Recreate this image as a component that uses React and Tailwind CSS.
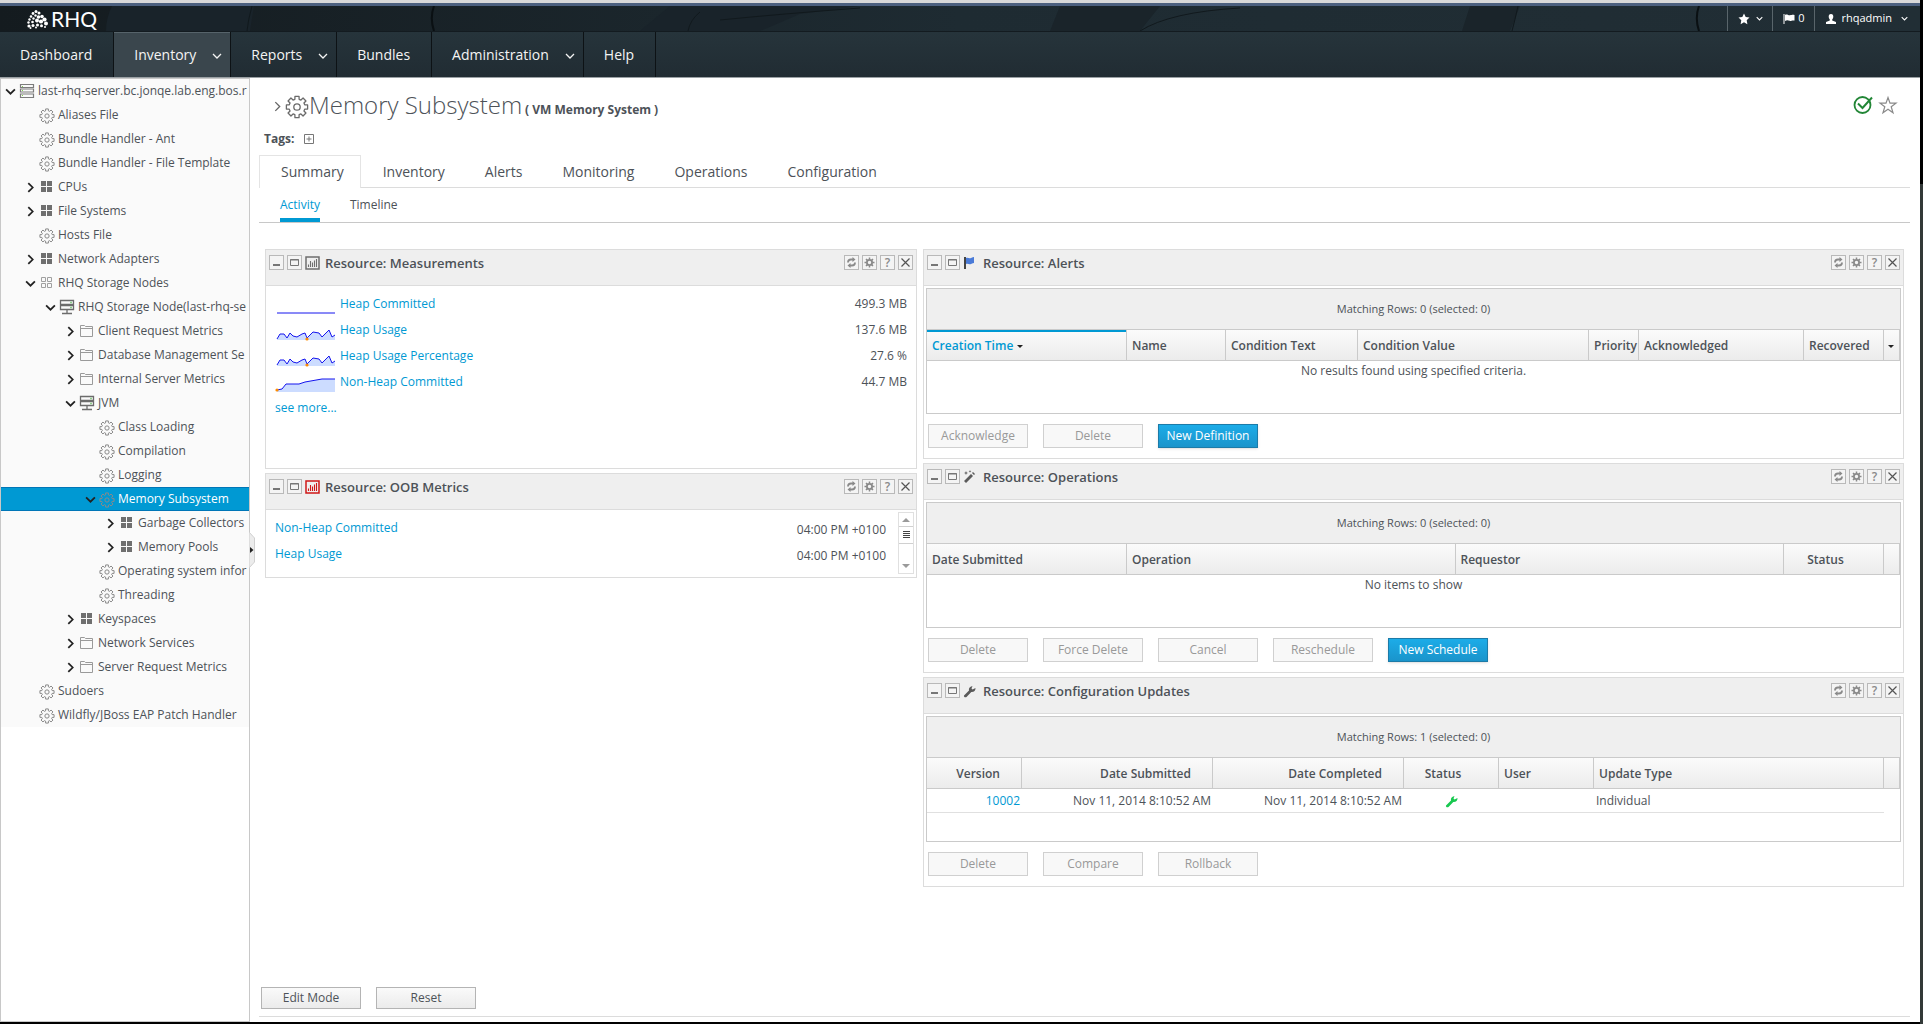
import { useState } from 'react';

const NAV_ITEMS = [
  { label: 'Dashboard' },
  { label: 'Inventory', menu: true, active: true },
  { label: 'Reports', menu: true },
  { label: 'Bundles' },
  { label: 'Administration', menu: true },
  { label: 'Help' },
];

const TABS = ['Summary', 'Inventory', 'Alerts', 'Monitoring', 'Operations', 'Configuration'];

// Full class names per tree depth
const INDENT = ['pl-1', 'pl-6', 'pl-11', 'pl-16', 'pl-[84px]', 'pl-[104px]'];

const TREE = [
  { label: 'last-rhq-server.bc.jonqe.lab.eng.bos.r', level: 0, icon: 'platform', state: 'open' },
  { label: 'Aliases File', level: 1, icon: 'gear' },
  { label: 'Bundle Handler - Ant', level: 1, icon: 'gear' },
  { label: 'Bundle Handler - File Template', level: 1, icon: 'gear' },
  { label: 'CPUs', level: 1, icon: 'group', state: 'closed' },
  { label: 'File Systems', level: 1, icon: 'group', state: 'closed' },
  { label: 'Hosts File', level: 1, icon: 'gear' },
  { label: 'Network Adapters', level: 1, icon: 'group', state: 'closed' },
  { label: 'RHQ Storage Nodes', level: 1, icon: 'groupOutline', state: 'open' },
  { label: 'RHQ Storage Node(last-rhq-se', level: 2, icon: 'server', state: 'open' },
  { label: 'Client Request Metrics', level: 3, icon: 'folder', state: 'closed' },
  { label: 'Database Management Se', level: 3, icon: 'folder', state: 'closed' },
  { label: 'Internal Server Metrics', level: 3, icon: 'folder', state: 'closed' },
  { label: 'JVM', level: 3, icon: 'server', state: 'open' },
  { label: 'Class Loading', level: 4, icon: 'gear' },
  { label: 'Compilation', level: 4, icon: 'gear' },
  { label: 'Logging', level: 4, icon: 'gear' },
  { label: 'Memory Subsystem', level: 4, icon: 'gear', state: 'open', selected: true },
  { label: 'Garbage Collectors', level: 5, icon: 'group', state: 'closed' },
  { label: 'Memory Pools', level: 5, icon: 'group', state: 'closed' },
  { label: 'Operating system infor', level: 4, icon: 'gear' },
  { label: 'Threading', level: 4, icon: 'gear' },
  { label: 'Keyspaces', level: 3, icon: 'group', state: 'closed' },
  { label: 'Network Services', level: 3, icon: 'folder', state: 'closed' },
  { label: 'Server Request Metrics', level: 3, icon: 'folder', state: 'closed' },
  { label: 'Sudoers', level: 1, icon: 'gear' },
  { label: 'Wildfly/JBoss EAP Patch Handler', level: 1, icon: 'gear' },
];

const USAGE = '2,22 5,17 9,17 12,21 15,16 18,19 22,20 27,17 30,16 32,21 38,15 44,16 47,20 54,13 57,20 60,18';

const MEASUREMENTS = [
  { name: 'Heap Committed', value: '499.3 MB', points: '2,22 60,22' },
  { name: 'Heap Usage', value: '137.6 MB', points: USAGE, low: [32, 21] },
  { name: 'Heap Usage Percentage', value: '27.6 %', points: USAGE, low: [32, 21] },
  { name: 'Non-Heap Committed', value: '44.7 MB', points: '2,21 7,20 11,15 24,15 30,13 47,10 60,10', low: [2, 20] },
];

const OOB = [
  { name: 'Non-Heap Committed', time: '04:00 PM +0100' },
  { name: 'Heap Usage', time: '04:00 PM +0100' },
];

/* ---------- icons ---------- */

// Eight-toothed cog outline, centred in a 24x24 box
const GEAR_PATH = (() => {
  const pts = [];
  for (let i = 0; i < 8; i++) {
    const base = (i * Math.PI) / 4 - Math.PI / 2;
    [[-0.27, 8], [-0.19, 10.8], [0.19, 10.8], [0.27, 8]].forEach(([a, r]) => {
      pts.push(`${(12 + r * Math.cos(base + a)).toFixed(2)} ${(12 + r * Math.sin(base + a)).toFixed(2)}`);
    });
  }
  return `M${pts.join('L')}Z`;
})();

function Gear({ className, width = 1.4 }) {
  return (
    <svg viewBox="0 0 24 24" className={className} fill="none" stroke="currentColor" strokeWidth={width} strokeLinejoin="round">
      <path d={GEAR_PATH} />
      <circle cx="12" cy="12" r="3.2" />
    </svg>
  );
}

function Chevron({ dir = 'down', className, width = 1.5 }) {
  const d = dir === 'down' ? 'M1 3l4 4 4-4' : 'M3 1l4 4-4 4';
  return (
    <svg viewBox="0 0 10 10" className={className} fill="none" stroke="currentColor" strokeWidth={width}>
      <path d={d} />
    </svg>
  );
}

function TreeIcon({ type }) {
  if (type === 'gear') return <Gear className="mt-[2px] size-4 text-[#8a8a8a]" width={1.5} />;
  if (type === 'group') {
    return (
      <svg viewBox="0 0 16 16" className="size-4" fill="#6f6f6f">
        <path d="M2 2h5v5H2zM8 2h5v5H8zM2 8h5v5H2zM8 8h5v5H8z" />
      </svg>
    );
  }
  if (type === 'groupOutline') {
    return (
      <svg viewBox="0 0 16 16" className="size-4" fill="none" stroke="#a0a0a0">
        <path d="M2.500 2.500h4v4h-4zM8.500 2.500h4v4h-4zM2.500 8.500h4v4h-4zM8.500 8.500h4v4h-4z" />
      </svg>
    );
  }
  if (type === 'folder') {
    return (
      <svg viewBox="0 0 16 16" className="size-4" fill="none" stroke="#9a9a9a">
        <path d="M1.500 13.500V2.500h4l1 1h7v10zM1.500 5.500h12" />
      </svg>
    );
  }
  if (type === 'server') {
    return (
      <svg viewBox="0 0 16 16" className="size-4" fill="none" stroke="#6c6c6c" strokeWidth="1.300">
        <path d="M1.500 1.500h13v4h-13zM1.500 6.500h13v4h-13zM8 11v3M3 14.500h10" />
        <path d="M11 3.500h2M11 8.500h2" stroke="#8ecf8a" />
      </svg>
    );
  }
  return (
    <svg viewBox="0 0 16 16" className="size-4" fill="none" stroke="#7c7c7c" strokeWidth="1.200">
      <path d="M1.500 1.500h13v3h-13zM1.500 6h13v3h-13zM1.500 11h13v3.500h-13z" />
      <path d="M3 3.500h1M3 7.500h1M3 12.500h1" stroke="#7fd34e" />
    </svg>
  );
}

function BarsIcon({ className }) {
  return (
    <svg viewBox="0 0 15 14" className={className} fill="none" stroke="currentColor" strokeWidth="1.500">
      <path d="M1 1h13v12H1z" />
      <path d="M3.500 11V8.500M5.500 11V5M7.500 11V6.500M9.500 11V4.500M11.500 11V3" strokeWidth="1.100" />
    </svg>
  );
}

function FlagIcon() {
  return (
    <svg viewBox="0 0 14 14" className="h-[14px] w-[14px]">
      <path d="M1 1h2v12H1z" fill="#444" />
      <path d="M3 2c2-1 3 1 5 0 1 0 1-1 3-1v6c-2 0-2 1-3 1-2 1-3-1-5 0z" fill="#4a7bd8" />
    </svg>
  );
}

function WandIcon() {
  return (
    <svg viewBox="0 0 14 14" className="h-[14px] w-[14px]" fill="#5a5a5a">
      <path d="M1 11l7-7 2 2-7 7zM9 3l1-1 2 2-1 1z" />
      <path d="M3 1l.6 1.400L5 3l-1.400.6L3 5l-.6-1.400L1 3l1.400-.6zM7 0l.4 1 1 .4-1 .4-.4 1-.4-1-1-.4 1-.4z" />
    </svg>
  );
}

function WrenchIcon({ className = 'text-[#5a5a5a]' }) {
  return (
    <svg viewBox="0 0 14 14" className={`h-[14px] w-[14px] ${className}`} fill="currentColor">
      <path d="M1 11.500l5-5c-.5-2 .5-4 3.500-4.500L8.500 4.500l1 1L12.500 4c.3 2.500-1.800 4.300-4.200 4L3.500 13c-1.400.8-3-.2-2.500-1.500z" />
    </svg>
  );
}

function Sparkline({ points, low }) {
  return (
    <svg viewBox="0 0 62 26" className="h-[26px] w-[62px]">
      {low && <polygon points={`2,23 ${points} 60,23`} fill="#ccdcff" />}
      <polyline points={points} fill="none" stroke="#1414ee" />
      {low && <circle cx={low[0]} cy={low[1] + 1} r="1.600" fill="#ff8c00" />}
    </svg>
  );
}

// Cluster of dots forming the mark beside the product name
function LogoMark() {
  const dots = [
    [3, 17, 1.6], [2.5, 13.5, 1.2], [3.5, 10.5, 1.2], [5, 7.5, 1.3], [7, 4.5, 1.4], [10, 2.5, 1.5],
    [13, 4, 1.5], [9.5, 6.5, 1.2], [7.5, 9.5, 1.2], [6.5, 13, 1.3], [7, 16.5, 1.5], [12.5, 8, 1.8],
    [16, 7.5, 1.8], [18.5, 10.5, 2.1], [11, 11.5, 2], [15, 12.5, 2.1], [11.5, 16, 1.5], [15.5, 16.8, 1.5],
    [20, 14.5, 2], [19, 18, 1], [4.5, 19, 1], [10, 18.5, 1],
  ];
  return (
    <svg viewBox="0 0 23 20" className="h-5 w-[23px]" fill="#fff">
      {dots.map(([cx, cy, r]) => (
        <circle key={`${cx}-${cy}`} cx={cx} cy={cy} r={r} />
      ))}
    </svg>
  );
}

/* ---------- header ---------- */

function TopBar() {
  return (
    <div className="relative flex h-[26px] items-stretch justify-between border-b border-[#131b20] bg-gradient-to-r from-[#141b1f] via-[#1e2b32] to-[#212e35] text-white">
      <svg viewBox="0 0 1920 25" preserveAspectRatio="none" className="absolute inset-0 h-full w-full" fill="none">
        <path d="M112 0C108 8 106 16 106 25H250L254 0zM670 0H860L800 8L760 25H640z" fill="#19232a" />
        <path d="M1060 0H1160L1140 25H1050zM1470 0H1520L1510 25H1462z" fill="#1a242a" />
        <path d="M434 0C431 8 431 16 434 25M1699 0C1696 8 1696 16 1699 25" stroke="#0a1013" strokeWidth="2" />
        <path d="M252 0Q248 14 247 25M720 14Q780 8 860 2M1140 25Q1170 6 1240 2M1518 0Q1515 14 1512 25M700 6Q690 14 688 25" stroke="#11191d" />
      </svg>
      <a href="#home" className="relative flex items-center gap-[2px] pl-[26px]">
        <LogoMark />
        <span className="font-['Lato',sans-serif] text-[21px] leading-5">RHQ</span>
      </a>
      <div className="relative flex text-[11px]">
        <button type="button" aria-label="Favorites" className="flex w-[45px] items-center justify-center gap-[6px] border-l border-[#59656b]">
          <svg viewBox="0 0 12 12" className="size-3" fill="#fff">
            <path d="M6 .5l1.700 3.600 3.800.5-2.800 2.700.7 3.900L6 9.300l-3.400 1.900.7-3.900L.5 4.600l3.800-.5z" />
          </svg>
          <Chevron className="size-[7px]" />
        </button>
        <button type="button" className="flex w-[42px] items-center justify-center gap-[3px] border-l border-[#59656b]">
          <svg viewBox="0 0 12 10" className="h-[10px] w-3" fill="#fff">
            <path d="M.5 0h1v10h-1zM2 1c2-1.200 3.500.6 5 .3C8.500 1.200 9 .6 11.500 1v5.500C9 6 8 7.200 6.500 6.800 5 6.400 4 6 2 7z" />
          </svg>
          0
        </button>
        <button type="button" className="flex items-center border-l border-[#59656b] pr-3 pl-[11px]">
          <svg viewBox="0 0 10 10" className="size-[10px]" fill="#fff">
            <path d="M5 0c1.600 0 2.400 1.200 2.300 2.700C7.200 4 6.600 4.900 6.200 5.400v1L10 8v2H0V8l3.800-1.600v-1C3.400 4.900 2.800 4 2.700 2.700 2.600 1.200 3.400 0 5 0z" />
          </svg>
          <span className="pr-[9px] pl-[5px]">rhqadmin</span>
          <Chevron className="size-[7px]" />
        </button>
      </div>
    </div>
  );
}

function MainNav() {
  return (
    <nav className="flex h-[46px] border-b border-[#9aa0a4] bg-gradient-to-b from-[#26343b] to-[#212c33]">
      {NAV_ITEMS.map((item) => (
        <a
          key={item.label}
          href={`#${item.label.toLowerCase()}`}
          className={`flex items-center border-r border-[#0d1215] pl-5 text-[14px] text-[#f4f4f4] ${
            item.menu ? 'gap-4 pr-2' : 'pr-[21px]'
          } ${item.active ? 'bg-[#3a464d] inset-shadow-[0_1px_#56636a]' : ''}`}
        >
          {item.label}
          {item.menu && <Chevron className="mt-[2px] size-[10px]" width={1.3} />}
        </a>
      ))}
    </nav>
  );
}

/* ---------- sidebar ---------- */

function ResourceTree() {
  return (
    <aside className="relative w-[250px] shrink-0 border border-[#c8c8c8] bg-white">
      <ul className="bg-[#fafafa]">
        {TREE.map((node) => (
          <li key={node.label}>
            <button
              type="button"
              className={`flex h-6 w-full items-center text-left text-[12px] ${INDENT[node.level]} ${
                node.selected ? 'border-y border-[#0076b7] bg-[#0099d3] text-white' : ''
              }`}
            >
              <span className="flex w-[14px] shrink-0 text-[#222]">
                {node.state && <Chevron dir={node.state === 'open' ? 'down' : 'right'} className="size-[11px]" width={1.6} />}
              </span>
              <span className="flex w-[19px] shrink-0">
                <TreeIcon type={node.icon} />
              </span>
              <span className="whitespace-nowrap">{node.label}</span>
            </button>
          </li>
        ))}
      </ul>
      <button type="button" aria-label="Collapse tree" className="absolute top-[453px] -right-[6px]">
        <svg viewBox="0 0 6 36" className="h-9 w-[6px]">
          <path d="M0 0l5.500 6v24L0 36z" fill="#ececec" stroke="#d0d0d0" />
          <path d="M1 15l3.500 3L1 21z" fill="#222" />
        </svg>
      </button>
    </aside>
  );
}

/* ---------- portlets ---------- */

function BoxButton({ label, children }) {
  return (
    <button type="button" aria-label={label} className="flex size-[15px] items-center justify-center border border-[#b9b9b9] bg-[#f4f4f4]">
      {children}
    </button>
  );
}

function Portlet({ title, icon, children }) {
  return (
    <section className="border border-[#dcdcdc] bg-white">
      <header className="flex h-9 items-start gap-[3px] border-b border-[#dcdcdc] bg-[#efefef] px-[3px] pt-[5px]">
        <BoxButton label="Minimize">
          <svg viewBox="0 0 13 13" className="size-[13px]">
            <path d="M3 8h7v2H3z" fill="#777" />
          </svg>
        </BoxButton>
        <BoxButton label="Maximize">
          <svg viewBox="0 0 13 13" className="size-[13px]" fill="none" stroke="#777">
            <path d="M2.500 3.500h8v6h-8zM2 4h9" />
          </svg>
        </BoxButton>
        <span className="flex h-[15px] w-[17px] items-center">{icon}</span>
        <h2 className="flex-1 text-[13px] leading-4 font-semibold">{title}</h2>
        <BoxButton label="Refresh">
          <svg viewBox="0 0 13 13" className="size-[13px]" fill="none" stroke="#8a8a8a" strokeWidth="1.800">
            <path d="M3 6.500C3 4.500 4.500 3.500 6 3.500h2M10 6.500c0 2-1.500 3-3 3H5" />
            <path d="M7.500 1l3 2.500-3 2.500zM5.500 12l-3-2.500 3-2.500z" fill="#8a8a8a" stroke="none" />
          </svg>
        </BoxButton>
        <BoxButton label="Settings">
          <svg viewBox="0 0 13 13" className="size-[13px]" fill="none" stroke="#8a8a8a">
            <circle cx="6.500" cy="6.500" r="2.600" strokeWidth="1.800" />
            <path d="M6.500 1.500v2M6.500 9.500v2M1.500 6.500h2M9.500 6.500h2M3 3l1.400 1.400M8.600 8.600L10 10M3 10l1.400-1.400M8.600 4.400L10 3" strokeWidth="1.500" />
          </svg>
        </BoxButton>
        <BoxButton label="Help">
          <span className="text-[12px] leading-3 font-semibold text-[#8a8a8a]">?</span>
        </BoxButton>
        <BoxButton label="Close">
          <svg viewBox="0 0 13 13" className="size-[13px]" fill="none" stroke="#555" strokeWidth="1.200">
            <path d="M2.500 2.500l8 8M10.500 2.500l-8 8" />
          </svg>
        </BoxButton>
      </header>
      {children}
    </section>
  );
}

function ActionButton({ label, primary }) {
  return (
    <button
      type="button"
      disabled={!primary}
      className={`h-6 w-[100px] border text-[12px] ${
        primary
          ? 'border-[#1c7ba8] bg-gradient-to-b from-[#1cace8] to-[#1a94cb] text-white shadow-sm'
          : 'border-[#d0d0d0] bg-[#f8f8f8] text-[#999]'
      }`}
    >
      {label}
    </button>
  );
}

/** Bordered list grid with its summary bar, column headings and buttons */
function ListGrid({ summary, columns, actions, empty, children }) {
  return (
    <div className="p-[2px] pb-[10px]">
      <div className="border border-[#cacaca]">
        <div className="flex h-[41px] items-center justify-center border-b border-[#cacaca] bg-[#efefef] text-[11px]">{summary}</div>
        <div className="min-h-[83px]">
          <table className="w-full table-fixed border-separate border-spacing-0 text-[12px]">
            <thead>
              <tr className="bg-gradient-to-b from-[#fbfbfb] to-[#ebebeb]">
                {columns.map((col, i) => (
                  <th
                    key={i}
                    scope="col"
                    className={`h-[31px] border-r border-b border-[#cacaca] pt-[2px] pb-0 font-semibold whitespace-nowrap ${col.width || ''} ${
                      col.align || 'pl-[5px] text-left'
                    } ${col.sorted ? 'text-[#0099d3] inset-shadow-[0_2px_#0099d3]' : ''}`}
                  >
                    {col.label}
                    {col.arrow && <span className="ml-1 inline-block border-x-[3px] border-t-[3px] border-x-transparent border-t-[#222] align-middle" />}
                  </th>
                ))}
              </tr>
            </thead>
            <tbody>
              {children}
              {empty && (
                <tr>
                  <td colSpan={columns.length} className="h-5 p-0 text-center">
                    {empty}
                  </td>
                </tr>
              )}
            </tbody>
          </table>
        </div>
      </div>
      <div className="mt-[10px] flex gap-[15px] pl-[2px]">
        {actions.map((action) => (
          <ActionButton key={action} label={action} primary={action.startsWith('New')} />
        ))}
      </div>
    </div>
  );
}

function MeasurementsPortlet() {
  return (
    <Portlet title="Resource: Measurements" icon={<BarsIcon className="h-[14px] w-[15px] text-[#6f6f6f]" />}>
      <div className="min-h-[182px] px-[9px] pt-[5px]">
        <table className="w-full text-[12px]">
          <tbody>
            {MEASUREMENTS.map((m) => (
              <tr key={m.name} className="h-[26px]">
                <td className="w-[65px] p-0">
                  <Sparkline points={m.points} low={m.low} />
                </td>
                <td className="p-0">
                  <a href="#metric" className="text-[#0099d3]">{m.name}</a>
                </td>
                <td className="p-0 text-right">{m.value}</td>
              </tr>
            ))}
          </tbody>
        </table>
        <a href="#more" className="block text-[12px] leading-[26px] text-[#0099d3]">see more...</a>
      </div>
    </Portlet>
  );
}

function OobPortlet() {
  return (
    <Portlet title="Resource: OOB Metrics" icon={<BarsIcon className="h-[14px] w-[15px] text-[#d01818]" />}>
      <div className="flex min-h-[67px] items-start pt-[2px] pr-[2px] pl-[9px]">
        <table className="mt-[3px] flex-1 text-[12px]">
          <tbody>
            {OOB.map((row) => (
              <tr key={row.name} className="h-[26px]">
                <td className="p-0">
                  <a href="#metric" className="text-[#0099d3]">{row.name}</a>
                </td>
                <td className="pt-[3px] pr-3 pb-0 text-right">{row.time}</td>
              </tr>
            ))}
          </tbody>
        </table>
        <div className="flex h-[62px] w-4 flex-col items-center border border-[#e0e0e0]">
          <svg viewBox="0 0 14 60" className="h-[60px] w-[14px]">
            <path d="M3 9l4-4 4 4zM3 51l4 4 4-4z" fill="#9a9a9a" />
            <path d="M0 13.500h14M0 30.500h14" stroke="#d0d0d0" />
            <path d="M4 18.500h7M4 20.500h7M4 22.500h7M4 24.500h7" stroke="#444" />
          </svg>
        </div>
      </div>
    </Portlet>
  );
}

function AlertsPortlet() {
  const columns = [
    { label: 'Creation Time', width: 'w-[200px]', sorted: true, arrow: true },
    { label: 'Name', width: 'w-[99px]' },
    { label: 'Condition Text', width: 'w-[132px]' },
    { label: 'Condition Value' },
    { label: 'Priority', width: 'w-[50px]' },
    { label: 'Acknowledged', width: 'w-[165px]' },
    { label: 'Recovered', width: 'w-[80px]' },
    { label: '', width: 'w-4', align: 'pl-0 text-left', arrow: true },
  ];
  return (
    <Portlet title="Resource: Alerts" icon={<FlagIcon />}>
      <ListGrid
        summary="Matching Rows: 0 (selected: 0)"
        columns={columns}
        empty="No results found using specified criteria."
        actions={['Acknowledge', 'Delete', 'New Definition']}
      />
    </Portlet>
  );
}

function OperationsPortlet() {
  const columns = [
    { label: 'Date Submitted', width: 'w-[200px]' },
    { label: 'Operation' },
    { label: 'Requestor' },
    { label: 'Status', width: 'w-[100px]', align: 'pr-4 text-center' },
    { label: '', width: 'w-4' },
  ];
  return (
    <Portlet title="Resource: Operations" icon={<WandIcon />}>
      <ListGrid
        summary="Matching Rows: 0 (selected: 0)"
        columns={columns}
        empty="No items to show"
        actions={['Delete', 'Force Delete', 'Cancel', 'Reschedule', 'New Schedule']}
      />
    </Portlet>
  );
}

function ConfigurationPortlet() {
  const columns = [
    { label: 'Version', width: 'w-[95px]', align: 'pr-[21px] text-right' },
    { label: 'Date Submitted', width: 'w-[191px]', align: 'pr-[21px] text-right' },
    { label: 'Date Completed', width: 'w-[191px]', align: 'pr-[21px] text-right' },
    { label: 'Status', width: 'w-[95px]', align: 'pr-4 text-center' },
    { label: 'User', width: 'w-[95px]' },
    { label: 'Update Type' },
    { label: '', width: 'w-4' },
  ];
  const cell = 'h-6 border-b border-[#e0e0e0] px-[2px] py-0';
  return (
    <Portlet title="Resource: Configuration Updates" icon={<WrenchIcon />}>
      <ListGrid
        summary="Matching Rows: 1 (selected: 0)"
        columns={columns}
        actions={['Delete', 'Compare', 'Rollback']}
      >
        <tr>
          <td className={`${cell} text-right`}>
            <a href="#10002" className="text-[#0099d3]">10002</a>
          </td>
          <td className={`${cell} text-right`}>Nov 11, 2014 8:10:52 AM</td>
          <td className={`${cell} text-right`}>Nov 11, 2014 8:10:52 AM</td>
          <td className={cell}>
            <WrenchIcon className="mx-auto text-[#18c850]" />
          </td>
          <td className={cell} />
          <td className={cell}>Individual</td>
          <td />
        </tr>
      </ListGrid>
    </Portlet>
  );
}

/* ---------- main ---------- */

function ResourceHeader() {
  return (
    <>
      <div className="flex h-8 items-center pr-3 pl-[13px]">
        <Chevron dir="right" className="mt-[3px] size-[11px] text-[#666]" width={1.2} />
        <Gear className="mt-1 ml-[2px] size-6 text-[#6a6a6a]" width={1.3} />
        <div className="flex flex-1 items-baseline gap-[3px]">
          <h1 className="text-[24px] leading-8 font-light">Memory Subsystem</h1>
          <span className="text-[12px] font-bold">( VM Memory System )</span>
        </div>
        <svg viewBox="0 0 20 20" className="size-5" fill="none" stroke="#228636" strokeWidth="1.800">
          <circle cx="9.500" cy="10" r="8" />
          <path d="M5 8.500l4.500 4.500L19 2.500" strokeWidth="2" />
        </svg>
        <button type="button" aria-label="Add to favorites" className="ml-[5px]">
          <svg viewBox="0 0 20 20" className="size-5" fill="none" stroke="#8a8a8a" strokeWidth="1.200">
            <path d="M10 2.500l2 5.700h6l-4.800 3.600 1.800 5.900-5-3.500-5 3.500 1.800-5.900L2 8.200h6z" />
          </svg>
        </button>
      </div>
      <div className="mt-[10px] flex h-4 items-center gap-[10px] pl-[5px] text-[12px] font-bold">
        Tags:
        <button type="button" aria-label="Add tag">
          <svg viewBox="0 0 10 10" className="size-[10px]" fill="none" stroke="#777">
            <path d="M.5.5h9v9h-9zM5 2.500v5M2.500 5h5" />
          </svg>
        </button>
      </div>
    </>
  );
}

function ResourceTabs() {
  const [active, setActive] = useState('Summary');
  return (
    <>
      <div role="tablist" className="mt-2 flex h-[33px] text-[14px]">
        {TABS.map((tab) => (
          <button
            key={tab}
            type="button"
            role="tab"
            aria-selected={active === tab}
            onClick={() => setActive(tab)}
            className={
              active === tab
                ? 'border border-b-0 border-[#e4e4e4] pr-4 pb-[2px] pl-[21px]'
                : 'border-b border-[#dcdcdc] pr-[18px] pl-[22px]'
            }
          >
            {tab}
          </button>
        ))}
        <span className="flex-1 border-b border-[#dcdcdc]" />
      </div>
      <div className="flex h-[35px] gap-[30px] border-b border-[#c8c8c8] pl-[21px] text-[12px]">
        <a href="#activity" className="flex items-center border-b-4 border-[#0099d3] pt-1 text-[#0099d3]">Activity</a>
        <a href="#timeline" className="flex items-center border-b-4 border-transparent pt-1">Timeline</a>
      </div>
    </>
  );
}

export default function App() {
  return (
    <div className="min-h-screen bg-gradient-to-b from-black from-18% to-[#333938] to-18% pr-[3px] font-['Open_Sans',sans-serif] text-[#4d5258]">
      <div className="flex min-h-screen flex-col border-b-2 border-black bg-white">
        <div className="h-[3px] bg-[#d9d9d9]" />
        <div className="h-[3px] bg-[#4c607f]" />
        <TopBar />
        <MainNav />
        <div className="flex flex-1">
          <ResourceTree />
          <main className="flex min-w-0 flex-1 flex-col pt-[11px] pr-[10px] pb-[5px] pl-[9px]">
            <ResourceHeader />
            <ResourceTabs />
            <div className="mt-[26px] grid grid-cols-[652fr_981fr] items-start gap-[6px] px-[6px]">
              <div className="flex min-w-0 flex-col gap-1">
                <MeasurementsPortlet />
                <OobPortlet />
              </div>
              <div className="flex min-w-0 flex-col gap-1">
                <AlertsPortlet />
                <OperationsPortlet />
                <ConfigurationPortlet />
              </div>
            </div>
            <div className="mt-auto flex gap-[15px] border-b border-[#dcdcdc] pb-[7px] pl-[2px]">
              {['Edit Mode', 'Reset'].map((label) => (
                <button
                  key={label}
                  type="button"
                  className="h-[22px] w-[100px] border border-[#b4b4b4] bg-gradient-to-b from-[#fafafa] to-[#ebebeb] text-[12px]"
                >
                  {label}
                </button>
              ))}
            </div>
          </main>
        </div>
      </div>
    </div>
  );
}
